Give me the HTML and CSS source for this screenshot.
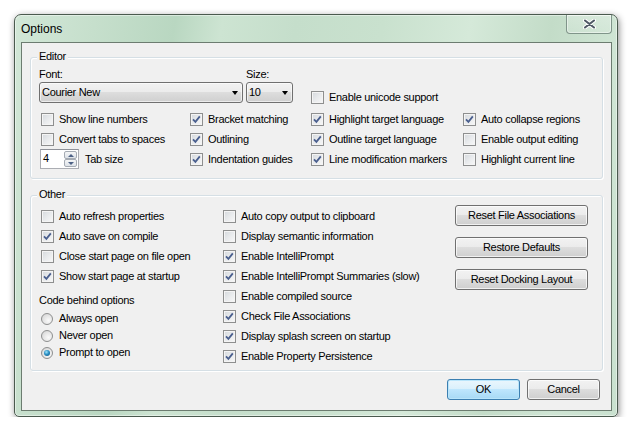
FILE: index.html
```html
<!DOCTYPE html>
<html>
<head>
<meta charset="utf-8">
<title>Options</title>
<link rel="stylesheet" href="styles.css">
</head>
<body>
<div class="window">
  <div class="titlebar">
    <span class="title">Options</span>
    <span class="close">
      <svg width="13" height="10" viewBox="0 0 13 10">
        <path d="M2 1.5 L11 8.5 M11 1.5 L2 8.5" stroke="#ffffff" stroke-width="4" stroke-linecap="round" fill="none"/>
        <path d="M2 1.5 L11 8.5 M11 1.5 L2 8.5" stroke="#4f5965" stroke-width="2.1" stroke-linecap="round" fill="none"/>
      </svg>
    </span>
  </div>
  <div class="client">
    <div class="group editor">
      <span class="legend">Editor</span>
      <div class="editor-top">
        <div class="field">
          <span class="field-label">Font:</span>
          <div class="combo combo-font"><span>Courier New</span><i class="arrow"></i></div>
        </div>
        <div class="field field-size">
          <span class="field-label">Size:</span>
          <div class="combo combo-size"><span>10</span><i class="arrow"></i></div>
        </div>
        <div class="check check-unicode"><span class="box"></span>Enable unicode support</div>
      </div>
      <div class="editor-grid">
        <div class="check"><span class="box"></span>Show line numbers</div>
        <div class="check"><span class="box on"><svg width="11" height="11" viewBox="0 0 11 11"><polyline points="2,5.3 4.4,7.8 8.8,2.4" /></svg></span>Bracket matching</div>
        <div class="check"><span class="box on"><svg width="11" height="11" viewBox="0 0 11 11"><polyline points="2,5.3 4.4,7.8 8.8,2.4" /></svg></span>Highlight target language</div>
        <div class="check"><span class="box on"><svg width="11" height="11" viewBox="0 0 11 11"><polyline points="2,5.3 4.4,7.8 8.8,2.4" /></svg></span>Auto collapse regions</div>

        <div class="check"><span class="box"></span>Convert tabs to spaces</div>
        <div class="check"><span class="box on"><svg width="11" height="11" viewBox="0 0 11 11"><polyline points="2,5.3 4.4,7.8 8.8,2.4" /></svg></span>Outlining</div>
        <div class="check"><span class="box on"><svg width="11" height="11" viewBox="0 0 11 11"><polyline points="2,5.3 4.4,7.8 8.8,2.4" /></svg></span>Outline target language</div>
        <div class="check"><span class="box"></span>Enable output editing</div>

        <div class="spin-cell">
          <div class="spin">
            <span class="spin-val">4</span>
            <span class="spin-btns">
              <span class="spin-btn"><i class="tri-up"></i></span>
              <span class="spin-btn"><i class="tri-down"></i></span>
            </span>
          </div>
          <span>Tab size</span>
        </div>
        <div class="check"><span class="box on"><svg width="11" height="11" viewBox="0 0 11 11"><polyline points="2,5.3 4.4,7.8 8.8,2.4" /></svg></span>Indentation guides</div>
        <div class="check"><span class="box on"><svg width="11" height="11" viewBox="0 0 11 11"><polyline points="2,5.3 4.4,7.8 8.8,2.4" /></svg></span>Line modification markers</div>
        <div class="check"><span class="box"></span>Highlight current line</div>
      </div>
    </div>

    <div class="group other">
      <span class="legend">Other</span>
      <div class="other-grid">
        <div class="col">
          <div class="check"><span class="box"></span>Auto refresh properties</div>
          <div class="check"><span class="box on"><svg width="11" height="11" viewBox="0 0 11 11"><polyline points="2,5.3 4.4,7.8 8.8,2.4" /></svg></span>Auto save on compile</div>
          <div class="check"><span class="box"></span>Close start page on file open</div>
          <div class="check"><span class="box on"><svg width="11" height="11" viewBox="0 0 11 11"><polyline points="2,5.3 4.4,7.8 8.8,2.4" /></svg></span>Show start page at startup</div>
          <div class="cb-label">Code behind options</div>
          <div class="radio-list">
            <div class="radio-item"><span class="radio"></span>Always open</div>
            <div class="radio-item"><span class="radio"></span>Never open</div>
            <div class="radio-item"><span class="radio"><span class="dot"></span></span>Prompt to open</div>
          </div>
        </div>
        <div class="col">
          <div class="check"><span class="box"></span>Auto copy output to clipboard</div>
          <div class="check"><span class="box"></span>Display semantic information</div>
          <div class="check"><span class="box on"><svg width="11" height="11" viewBox="0 0 11 11"><polyline points="2,5.3 4.4,7.8 8.8,2.4" /></svg></span>Enable IntelliPrompt</div>
          <div class="check"><span class="box on"><svg width="11" height="11" viewBox="0 0 11 11"><polyline points="2,5.3 4.4,7.8 8.8,2.4" /></svg></span>Enable IntelliPrompt Summaries (slow)</div>
          <div class="check"><span class="box"></span>Enable compiled source</div>
          <div class="check"><span class="box on"><svg width="11" height="11" viewBox="0 0 11 11"><polyline points="2,5.3 4.4,7.8 8.8,2.4" /></svg></span>Check File Associations</div>
          <div class="check"><span class="box on"><svg width="11" height="11" viewBox="0 0 11 11"><polyline points="2,5.3 4.4,7.8 8.8,2.4" /></svg></span>Display splash screen on startup</div>
          <div class="check"><span class="box on"><svg width="11" height="11" viewBox="0 0 11 11"><polyline points="2,5.3 4.4,7.8 8.8,2.4" /></svg></span>Enable Property Persistence</div>
        </div>
        <div class="col col-buttons">
          <button class="btn btn-wide">Reset File Associations</button>
          <button class="btn btn-wide">Restore Defaults</button>
          <button class="btn btn-wide">Reset Docking Layout</button>
        </div>
      </div>
    </div>

    <div class="actions">
      <button class="btn btn-dlg btn-default">OK</button>
      <button class="btn btn-dlg">Cancel</button>
    </div>
  </div>
</div>
</body>
</html>
```

FILE: styles.css
```css
* {
  box-sizing: border-box;
}

html,
body {
  margin: 0;
  background: #ffffff;
}

body {
  padding: 14px 0 0 14px;
  font-family: "Liberation Sans", Arial, sans-serif;
  font-size: 11px;
  line-height: 13px;
  letter-spacing: -0.3px;
  color: #000000;
}

.window {
  width: 604px;
  height: 403px;
  border: 1px solid #4a5a4e;
  border-radius: 7px 7px 5px 5px;
  padding: 0 5px 5px 6px;
  display: flex;
  flex-direction: column;
  background: linear-gradient(100deg, #d2e7d7 0%, #c6dfcc 12%, #b9d7c1 24%, #cde4d2 31%, #c5decb 42%, #c9e1ce 55%, #d5e9d9 68%, #c3dcc8 80%, #cfe5d4 90%, #c9e1cf 100%);
  box-shadow: 1px 2px 7px rgba(0, 0, 0, 0.45), inset 0 0 0 1px rgba(255, 255, 255, 0.45);
}

.titlebar {
  height: 27px;
  display: flex;
  align-items: center;
  justify-content: space-between;
}

.title {
  font-size: 12px;
  margin-top: 1px;
  letter-spacing: 0;
}

.close {
  align-self: flex-start;
  width: 46px;
  height: 19px;
  border: 1px solid #80958a;
  border-top: none;
  border-radius: 0 0 4px 4px;
  display: flex;
  align-items: center;
  justify-content: center;
  background: linear-gradient(rgba(255, 255, 255, 0.25), rgba(255, 255, 255, 0.1));
  box-shadow: inset 0 0 0 1px rgba(255, 255, 255, 0.45);
}

.client {
  flex: 1;
  border: 1px solid #6c7c70;
  background: #f0f0f0;
  padding: 14px 8px 0 8px;
  display: flex;
  flex-direction: column;
}

.group {
  position: relative;
  border: 1px solid #d5dfe5;
  border-radius: 3px;
  box-shadow: inset 1px 1px 0 #ffffff, 1px 1px 0 #ffffff;
}

.legend {
  position: absolute;
  left: 6px;
  top: -8px;
  padding: 0 2px;
  background: #f0f0f0;
}

.editor {
  height: 122px;
  padding: 10px 0 0 8px;
}

.editor-top {
  display: flex;
  align-items: flex-end;
}

.field {
  display: flex;
  flex-direction: column;
}

.field-size {
  margin-left: 3px;
}

.field-label {
  margin-bottom: 1px;
}

.combo {
  height: 21px;
  border: 1px solid #707070;
  border-radius: 3px;
  display: flex;
  align-items: center;
  justify-content: space-between;
  padding: 0 4px 0 2px;
  background: linear-gradient(#f2f2f2 0%, #ebebeb 50%, #dddddd 50%, #cfcfcf 100%);
  box-shadow: inset 0 0 0 1px rgba(255, 255, 255, 0.6);
}

.combo-font {
  width: 204px;
}

.combo-size {
  width: 47px;
}

.arrow {
  width: 0;
  height: 0;
  border-left: 3.5px solid transparent;
  border-right: 3.5px solid transparent;
  border-top: 4px solid #000000;
  margin-top: 1px;
}

.check-unicode {
  margin-left: 16px;
  margin-bottom: -4px;
}

.editor-grid {
  margin-top: 6px;
  display: grid;
  grid-template-columns: 149px 121px 152px 1fr;
  grid-auto-rows: 20px;
}

.check {
  display: flex;
  align-items: center;
  height: 20px;
  padding-left: 2px;
  white-space: nowrap;
}

.box {
  flex: none;
  width: 13px;
  height: 13px;
  margin-right: 5px;
  border: 1px solid #8e8f8f;
  background: linear-gradient(135deg, #d4d8dc 0%, #e8eaec 50%, #f8f8f8 100%);
  box-shadow: inset 0 0 0 1px #f4f4f4;
  display: flex;
}

.box svg {
  display: block;
}

.box polyline {
  fill: none;
  stroke: #4a5f8e;
  stroke-width: 1.8;
}

.spin-cell {
  display: flex;
  align-items: center;
  padding-left: 1px;
}

.spin {
  width: 39px;
  height: 20px;
  margin-right: 6px;
  border: 1px solid #abadb3;
  border-top-color: #8e9198;
  background: #ffffff;
  display: flex;
  justify-content: space-between;
  align-items: stretch;
}

.spin-val {
  padding: 2px 0 0 2px;
}

.spin-btns {
  width: 15px;
  display: flex;
  flex-direction: column;
  padding: 1px;
}

.spin-btn {
  flex: 1;
  border: 1px solid #a5abb3;
  border-radius: 2px;
  background: linear-gradient(#f5f6f7, #dde2e8);
  display: flex;
  align-items: center;
  justify-content: center;
}

.tri-up {
  width: 0;
  height: 0;
  border-left: 3px solid transparent;
  border-right: 3px solid transparent;
  border-bottom: 3px solid #4d6185;
}

.tri-down {
  width: 0;
  height: 0;
  border-left: 3px solid transparent;
  border-right: 3px solid transparent;
  border-top: 3px solid #4d6185;
}

.other {
  margin-top: 16px;
  height: 176px;
  padding: 10px 0 0 8px;
}

.other-grid {
  display: grid;
  grid-template-columns: 182px 234px 133px;
}

.col {
  display: flex;
  flex-direction: column;
}

.cb-label {
  margin-top: 8px;
}

.radio-list {
  margin-top: 3px;
}

.radio-item {
  display: flex;
  align-items: center;
  height: 17px;
  padding-left: 2px;
}

.radio {
  flex: none;
  width: 12px;
  height: 12px;
  margin-right: 6px;
  border-radius: 50%;
  border: 1px solid #8e8f8f;
  background: radial-gradient(circle at 65% 65%, #fafafa 0%, #e6e6e6 50%, #cfcfcf 100%);
  display: flex;
  align-items: center;
  justify-content: center;
}

.dot {
  width: 6px;
  height: 6px;
  border-radius: 50%;
  background: radial-gradient(circle at 40% 35%, #9fe5fb 0%, #2a8fc4 45%, #0e4f77 100%);
}

.col-buttons {
  margin-top: -1px;
  gap: 11px;
}

.btn {
  font-family: "Liberation Sans", Arial, sans-serif;
  font-size: 11px;
  line-height: 13px;
  letter-spacing: -0.3px;
  color: #000000;
  height: 21px;
  padding: 0;
  border: 1px solid #707070;
  border-radius: 3px;
  background: linear-gradient(#f2f2f2 0%, #ebebeb 50%, #dddddd 50%, #cfcfcf 100%);
  box-shadow: inset 0 0 0 1px rgba(255, 255, 255, 0.7);
}

.btn-wide {
  width: 133px;
}

.actions {
  margin-top: 8px;
  margin-right: 3px;
  display: flex;
  justify-content: flex-end;
  gap: 7px;
}

.btn-dlg {
  width: 73px;
}

.btn-default {
  border-color: #3c7fb1;
  background: linear-gradient(#eaf6fd 0%, #d9f0fc 50%, #bee6fd 50%, #a7d9f5 100%);
  box-shadow: inset 0 0 0 1px #b9e5fb;
}
```
